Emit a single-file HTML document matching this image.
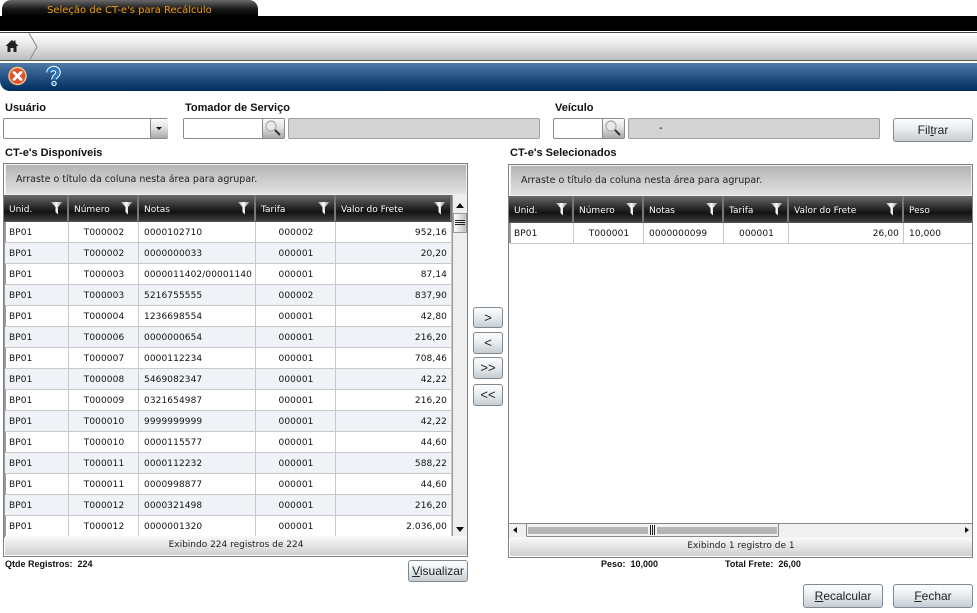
<!DOCTYPE html>
<html lang="pt"><head><meta charset="utf-8"><title>Seleção de CT-e's para Recálculo</title>
<style>
*{box-sizing:border-box}
html,body{margin:0;padding:0;width:977px;height:613px;overflow:hidden;background:#fff;font-family:"DejaVu Sans",Verdana,sans-serif;font-size:9px;color:#111}
.a{position:absolute}
.lbl{position:absolute;font:bold 11px/14px "Liberation Sans",Arial,sans-serif;color:#111;white-space:nowrap}
.sm{position:absolute;font:bold 9px/12px "Liberation Sans",Arial,sans-serif;color:#111;white-space:nowrap}
.inp{position:absolute;height:21px;background:#fff;border:1px solid #8a8a8a;border-radius:2px}
.dis{position:absolute;height:21px;background:#d4d4d4;border:1px solid #a0a0a0;border-radius:2px}
.sb{position:absolute;top:-1px;height:21px;background:linear-gradient(#fafafa,#e2e2e2 45%,#a9a9a9);border:1px solid #8a8a8a}
.btn{position:absolute;background:linear-gradient(#fdfdfd,#e9edf0 45%,#c6ccd1);border:1px solid #7d8a94;border-radius:3px;font:12px/20px "Liberation Sans",Arial,sans-serif;color:#222;text-align:center}
.grp{position:absolute;left:1px;top:0;height:31px;background:linear-gradient(#b4b4b4,#e2e2e2);border:1px solid #f0f0f0;line-height:29px;padding-left:10px;color:#222;font-size:9.500px}
.grid{position:absolute;border:1px solid #808080;background:#fff;overflow:hidden}
.hd{position:absolute;top:31px;height:27px;background:linear-gradient(#6a6a6a,#2c2c2c 45%,#121212 65%,#3e3e3e);border-bottom:1px solid #555}
.th{position:absolute;top:0;height:26px;border-right:2px solid #777;color:#fff;line-height:30px;padding-left:5px;white-space:nowrap;text-shadow:0 0 1px #000}
.th svg{position:absolute;right:3px;top:7px}
table{position:absolute;border-collapse:separate;border-spacing:0;table-layout:fixed;font-size:9px;color:#111}
td{height:21px;padding:2px 4px 0 5px;border-right:1px solid #c8c8c8;border-bottom:1px solid #c8c8c8;white-space:nowrap;overflow:hidden;line-height:18px;letter-spacing:.1px}
td:first-child{padding-left:4px}
tr:nth-child(even) td{background:#eff3f8}
.c{text-align:center}.r{text-align:right}
.ft{position:absolute;left:1px;height:19px;background:linear-gradient(#fafafa,#cfcfcf);text-align:center;line-height:18px;color:#222}
</style></head><body>

<svg class="a" width="0" height="0" style="left:0;top:0"><defs>
<linearGradient id="fg" x1="0" y1="0" x2="1" y2="0"><stop offset="0" stop-color="#9a9a9a"/><stop offset=".45" stop-color="#fff"/><stop offset="1" stop-color="#8a8a8a"/></linearGradient>
<linearGradient id="tg" x1="0" y1="0" x2="1" y2="0"><stop offset="0" stop-color="#fff"/><stop offset="1" stop-color="#c0c0c0"/></linearGradient>
</defs></svg>

<div class="a" style="left:0;top:0;width:977px;height:16px;background:#fff"></div>
<div class="a" style="left:2px;top:0;width:256px;height:17px;background:linear-gradient(#6a6a6a,#161616 55%,#000);border-radius:9px 9px 0 0"></div>
<div class="a" style="left:47px;top:5px;color:#f09a10;font-size:10px;line-height:12px;white-space:nowrap">Seleção de CT-e's para Recálculo</div>
<div class="a" style="left:0;top:16px;width:977px;height:15px;background:#000"></div>
<div class="a" style="left:0;top:32px;width:977px;height:29px;background:linear-gradient(#fff,#e6e6e6 45%,#bdbdbd);border-top:1px solid #444;border-bottom:1px solid #555"></div>
<svg class="a" style="left:0;top:32px" width="42" height="30"><path d="M29 1L37 15L29 29" fill="none" stroke="#8a8a8a"/><path d="M12 8L5.500 14H7.500V20H10.500V16H13.500V20H16.500V14H18.500L15.500 11V8.500H14V9.800Z" fill="#222"/></svg>

<div class="a" style="left:0;top:63px;width:977px;height:28px;background:linear-gradient(#4f7aa8,#2c5a8c 40%,#002c5e);border-radius:0 0 0 10px"></div>
<svg class="a" style="left:7px;top:65px" width="55" height="22">
<circle cx="10.500" cy="11" r="8.500" fill="#e2522a" stroke="#f3c48c" stroke-width="1.500"/>
<path d="M7 7.500L14 14.500M14 7.500L7 14.500" stroke="#fff" stroke-width="2.800" stroke-linecap="round"/>
<path d="M42 7.500C42 2.500 51 2 51 7.500C51 11 47 11 47 14.500" fill="none" stroke="#fff" stroke-width="5.500"/>
<path d="M42 7.500C42 2.500 51 2 51 7.500C51 11 47 11 47 14.500" fill="none" stroke="#2578c0" stroke-width="3.500"/>
<circle cx="47" cy="18.500" r="2.200" fill="#2578c0" stroke="#fff"/>
</svg>

<div class="lbl" style="left:5px;top:101px">Usuário</div>
<div class="lbl" style="left:185px;top:101px">Tomador de Serviço</div>
<div class="lbl" style="left:555px;top:101px">Veículo</div>

<div class="inp" style="left:3px;top:118px;width:165px"><div class="sb" style="left:146px;width:18px;border-width:0 0 0 1px;top:0;height:19px"></div>
<svg class="a" style="left:151px;top:7px" width="8" height="5"><path d="M1 1H7L4 4Z" fill="#111"/></svg></div>

<div class="inp" style="left:183px;top:118px;width:102px"><div class="sb" style="left:78px;width:22px;top:0;height:19px;border-width:0 0 0 1px"></div>
<svg class="a" style="left:79px;top:0" width="21" height="19"><circle cx="8" cy="7" r="5" fill="#e8e8e8" stroke="#aaa" stroke-width="1.200"/><path d="M12 11L17 16" stroke="#333" stroke-width="2"/></svg></div>
<div class="dis" style="left:288px;top:118px;width:252px"></div>

<div class="inp" style="left:553px;top:118px;width:72px"><div class="sb" style="left:48px;width:22px;top:0;height:19px;border-width:0 0 0 1px"></div>
<svg class="a" style="left:49px;top:0" width="21" height="19"><circle cx="8" cy="7" r="5" fill="#e8e8e8" stroke="#aaa" stroke-width="1.200"/><path d="M12 11L17 16" stroke="#333" stroke-width="2"/></svg></div>
<div class="dis" style="left:628px;top:118px;width:252px;line-height:20px;padding-left:30px;font-size:10px;color:#000">-</div>
<div class="btn" style="left:893px;top:118px;width:80px;height:24px;line-height:23px">Fil<u>t</u>rar</div>

<div class="lbl" style="left:5px;top:146px">CT-e's Disponíveis</div>
<div class="lbl" style="left:510px;top:146px">CT-e's Selecionados</div>

<!-- LEFT GRID -->
<div class="grid" style="left:3px;top:163px;width:465px;height:394px">
<div class="grp" style="width:462px">Arraste o título da coluna nesta área para agrupar.</div>
<div class="hd" style="left:0;width:448px">
<div class="th" style="left:0;width:65px">Unid.<svg width="13" height="14"><path d="M0 0H11.500L7 5V12.500L4.500 10V5Z" fill="url(#fg)"/></svg></div>
<div class="th" style="left:65px;width:70px">Número<svg width="13" height="14"><path d="M0 0H11.500L7 5V12.500L4.500 10V5Z" fill="url(#fg)"/></svg></div>
<div class="th" style="left:135px;width:117px">Notas<svg width="13" height="14"><path d="M0 0H11.500L7 5V12.500L4.500 10V5Z" fill="url(#fg)"/></svg></div>
<div class="th" style="left:252px;width:80px">Tarifa<svg width="13" height="14"><path d="M0 0H11.500L7 5V12.500L4.500 10V5Z" fill="url(#fg)"/></svg></div>
<div class="th" style="left:332px;width:116px">Valor do Frete<svg width="13" height="14"><path d="M0 0H11.500L7 5V12.500L4.500 10V5Z" fill="url(#fg)"/></svg></div>
</div>
<div class="a" style="left:0;top:58px;width:2px;height:316px;background:#999"></div>
<table style="left:1px;top:58px;width:447px">
<colgroup><col style="width:64px"><col style="width:70px"><col style="width:117px"><col style="width:80px"><col style="width:116px"></colgroup>
<tr><td>BP01</td><td class="c">T000002</td><td>0000102710</td><td class="c">000002</td><td class="r">952,16</td></tr>
<tr><td>BP01</td><td class="c">T000002</td><td>0000000033</td><td class="c">000001</td><td class="r">20,20</td></tr>
<tr><td>BP01</td><td class="c">T000003</td><td style="padding-right:0">0000011402/00001140</td><td class="c">000001</td><td class="r">87,14</td></tr>
<tr><td>BP01</td><td class="c">T000003</td><td>5216755555</td><td class="c">000002</td><td class="r">837,90</td></tr>
<tr><td>BP01</td><td class="c">T000004</td><td>1236698554</td><td class="c">000001</td><td class="r">42,80</td></tr>
<tr><td>BP01</td><td class="c">T000006</td><td>0000000654</td><td class="c">000001</td><td class="r">216,20</td></tr>
<tr><td>BP01</td><td class="c">T000007</td><td>0000112234</td><td class="c">000001</td><td class="r">708,46</td></tr>
<tr><td>BP01</td><td class="c">T000008</td><td>5469082347</td><td class="c">000001</td><td class="r">42,22</td></tr>
<tr><td>BP01</td><td class="c">T000009</td><td>0321654987</td><td class="c">000001</td><td class="r">216,20</td></tr>
<tr><td>BP01</td><td class="c">T000010</td><td>9999999999</td><td class="c">000001</td><td class="r">42,22</td></tr>
<tr><td>BP01</td><td class="c">T000010</td><td>0000115577</td><td class="c">000001</td><td class="r">44,60</td></tr>
<tr><td>BP01</td><td class="c">T000011</td><td>0000112232</td><td class="c">000001</td><td class="r">588,22</td></tr>
<tr><td>BP01</td><td class="c">T000011</td><td>0000998877</td><td class="c">000001</td><td class="r">44,60</td></tr>
<tr><td>BP01</td><td class="c">T000012</td><td>0000321498</td><td class="c">000001</td><td class="r">216,20</td></tr>
<tr><td>BP01</td><td class="c">T000012</td><td>0000001320</td><td class="c">000001</td><td class="r">2.036,00</td></tr>
</table>
<div class="a" style="left:448px;top:31px;width:15px;height:341px;background:#eee;border-left:1px solid #999"></div>
<svg class="a" style="left:449px;top:32px" width="14" height="342"><path d="M3 12H11L7 7Z" fill="#111"/><path d="M3 331H11L7 336Z" fill="#111"/><rect x="0.500" y="17.500" width="13" height="19" fill="url(#tg)" stroke="#999"/><path d="M2 24.500H12M2 26.500H12M2 28.500H12" stroke="#222"/></svg>
<div class="ft" style="top:372px;width:462px">Exibindo 224 registros de 224</div>
</div>

<div class="sm" style="left:5px;top:558px">Qtde Registros:&nbsp; 224</div>
<div class="btn" style="left:408px;top:560px;width:60px;height:22px">
<u>V</u>isualizar</div>

<!-- MOVE BUTTONS -->
<div class="btn" style="left:473px;top:307px;width:30px;height:21px;font-size:13px;line-height:19px">&gt;</div>
<div class="btn" style="left:473px;top:332px;width:30px;height:22px;font-size:13px;line-height:20px">&lt;</div>
<div class="btn" style="left:473px;top:357px;width:30px;height:22px;font-size:13px;line-height:20px">&gt;&gt;</div>
<div class="btn" style="left:473px;top:384px;width:30px;height:22px;font-size:13px;line-height:20px">&lt;&lt;</div>

<!-- RIGHT GRID -->
<div class="grid" style="left:508px;top:164px;width:465px;height:394px">
<div class="grp" style="width:462px">Arraste o título da coluna nesta área para agrupar.</div>
<div class="hd" style="left:0;width:464px">
<div class="th" style="left:0;width:65px">Unid.<svg width="13" height="14"><path d="M0 0H11.500L7 5V12.500L4.500 10V5Z" fill="url(#fg)"/></svg></div>
<div class="th" style="left:65px;width:70px">Número<svg width="13" height="14"><path d="M0 0H11.500L7 5V12.500L4.500 10V5Z" fill="url(#fg)"/></svg></div>
<div class="th" style="left:135px;width:80px">Notas<svg width="13" height="14"><path d="M0 0H11.500L7 5V12.500L4.500 10V5Z" fill="url(#fg)"/></svg></div>
<div class="th" style="left:215px;width:65px">Tarifa<svg width="13" height="14"><path d="M0 0H11.500L7 5V12.500L4.500 10V5Z" fill="url(#fg)"/></svg></div>
<div class="th" style="left:280px;width:115px">Valor do Frete<svg width="13" height="14"><path d="M0 0H11.500L7 5V12.500L4.500 10V5Z" fill="url(#fg)"/></svg></div>
<div class="th" style="left:395px;width:69px;border:0">Peso</div>
</div>
<div class="a" style="left:0;top:58px;width:2px;height:20px;background:#999"></div>
<table style="left:1px;top:58px;width:463px">
<colgroup><col style="width:64px"><col style="width:70px"><col style="width:80px"><col style="width:65px"><col style="width:115px"><col style="width:69px"></colgroup>
<tr><td>BP01</td><td class="c">T000001</td><td>0000000099</td><td class="c">000001</td><td class="r">26,00</td><td style="border-right:0">10,000</td></tr>
</table>
<div class="a" style="left:0;top:358px;width:464px;height:15px;background:#f0f0f0;border-top:1px solid #888"></div>
<svg class="a" style="left:0;top:358px" width="464" height="15"><path d="M8 4V10L4 7Z" fill="#111"/><path d="M456 4V10L460 7Z" fill="#111"/><rect x="17.500" y="0.500" width="252" height="13" rx="1" fill="#f2f2f2" stroke="#888"/><rect x="19" y="4" width="249" height="7" fill="#b5b5b5"/><rect x="139" y="2" width="9" height="11" fill="#f2f2f2"/><path d="M141.500 2V12M143.500 2V12M145.500 2V12" stroke="#222"/></svg>
<div class="ft" style="top:372px;width:462px">Exibindo 1 registro de 1</div>
</div>

<div class="sm" style="left:601px;top:558px">Peso:&nbsp; 10,000</div>
<div class="sm" style="left:725px;top:558px">Total Frete:&nbsp; 26,00</div>

<div class="btn" style="left:803px;top:584px;width:80px;height:24px;line-height:23px"><u>R</u>ecalcular</div>
<div class="btn" style="left:893px;top:584px;width:80px;height:24px;line-height:23px"><u>F</u>echar</div>
</body></html>
